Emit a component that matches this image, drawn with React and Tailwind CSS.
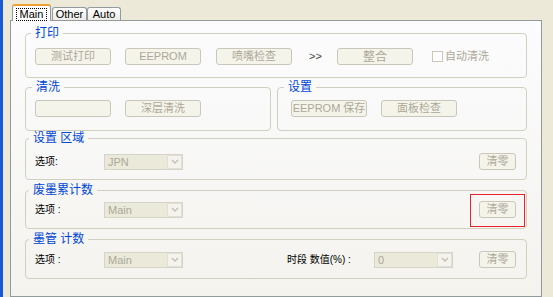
import React from 'react';

function Btn({ children, className = '' }) {
    return (
        <div className={`h-[17px] shrink-0 flex items-center justify-center rounded-[3px] border border-[#c9c7ba] bg-[#f5f4ea] text-[11px] leading-none text-[#aca899] ${className}`}>
            {children}
        </div>
    );
}

function Combo({ value, className = '' }) {
    return (
        <div className={`h-[16px] w-[79px] shrink-0 flex border border-[#d6d4c8] bg-[#ebe9da] ${className}`}>
            <div className="flex-1 pl-[3px] text-[11px] leading-[14px] text-[#aca899]">{value}</div>
            <div className="w-[15px] flex items-center justify-center border border-[#e2e0d6] bg-[#f4f3ec]">
                <svg width="8" height="5" viewBox="0 0 8 5">
                    <path d="M1 1l3 3 3-3" stroke="#c4c2b6" fill="none" strokeWidth="1.5" />
                </svg>
            </div>
        </div>
    );
}

function Group({ title, legendClass = '', className = '', children }) {
    return (
        <fieldset className={`relative border border-[#d0d0bf] rounded-[4px] ${className}`}>
            <legend className={`h-[13px] px-[4px] text-[12px] leading-[13px] text-[#0046d5] ${legendClass}`}>
                {title}
            </legend>
            {children}
        </fieldset>
    );
}

function Label({ children, className = '' }) {
    return <div className={`shrink-0 text-[10px] leading-none text-black ${className}`}>{children}</div>;
}

export default function App() {
    return (
        <div className="w-[553px] h-[297px] flex overflow-hidden bg-[#ece9d8] font-[family-name:Liberation_Sans,Noto_Sans_CJK_SC,sans-serif]">
            {/* window edge */}
            <div className="w-[3px] bg-[#1a5ad9]" />

            <div className="ml-[7px] w-[532px] flex flex-col">
                {/* Tabs */}
                <div className="h-[20px] flex items-end pl-[2px] text-[11px] text-black">
                    <div className="relative z-10 -mb-px h-[17px] w-[39px] flex items-start justify-center pt-[2px] rounded-t-[3px] border-x border-t-2 border-x-[#919b9c] border-t-[#f0a030] bg-[#fcfcfe]">
                        <span className="px-[3px] leading-[11px] border border-dotted border-black">Main</span>
                    </div>
                    <div className="ml-[1px] h-[13px] w-[35px] flex items-center justify-center rounded-t-[3px] border-x border-t border-[#919b9c] bg-linear-to-b from-white to-[#ecebe6] leading-none">
                        Other
                    </div>
                    <div className="h-[13px] w-[34px] flex items-center justify-center rounded-t-[3px] border-x border-t border-[#919b9c] bg-linear-to-b from-white to-[#ecebe6] leading-none">
                        Auto
                    </div>
                </div>

                {/* Panel */}
                <div className="flex-1 flex flex-col border border-[#919b9c] bg-linear-to-b from-[#fcfcfe] to-[#f4f3ee] pt-[6px] px-[14px]">
                    {/* 打印 */}
                    <Group title="打印" legendClass="ml-[5px]" className="h-[51px]">
                        <div className="mt-[8px] flex items-center pl-[9px]">
                            <Btn className="w-[76px]">测试打印</Btn>
                            <Btn className="w-[76px] ml-[14px]">EEPROM</Btn>
                            <Btn className="w-[76px] ml-[15px]">喷嘴检查</Btn>
                            <div className="ml-[17px] w-[10px] text-[11px] leading-none text-[#444]">&gt;&gt;</div>
                            <Btn className="w-[76px] ml-[18px] text-[12px]">整合</Btn>
                            <div className="ml-[19px] w-[11px] h-[11px] border border-[#c9c7ba] bg-white" />
                            <div className="ml-[2px] text-[11px] leading-none text-[#aca899]">自动清洗</div>
                        </div>
                    </Group>

                    {/* 清洗 / 设置 */}
                    <div className="mt-[3px] flex gap-[6px]">
                        <Group title="清洗" legendClass="ml-[6px]" className="w-[246px] h-[50px]">
                            <div className="mt-[6px] flex items-center pl-[9px]">
                                <Btn className="w-[76px]" />
                                <Btn className="w-[76px] ml-[14px]">深层清洗</Btn>
                            </div>
                        </Group>
                        <Group title="设置" legendClass="ml-[6px]" className="w-[250px] h-[50px]">
                            <div className="mt-[6px] flex items-center pl-[13px]">
                                <Btn className="w-[76px]">EEPROM 保存</Btn>
                                <Btn className="w-[76px] ml-[14px]">面板检查</Btn>
                            </div>
                        </Group>
                    </div>

                    {/* 设置区域 */}
                    <Group title="设置 区域" legendClass="ml-[3px]" className="mt-[1px] h-[48px]">
                        <div className="mt-[8px] flex items-center pl-[9px] pr-[10px]">
                            <Label className="w-[69px]">选项:</Label>
                            <Combo value="JPN" />
                            <Btn className="w-[37px] ml-auto">清零</Btn>
                        </div>
                    </Group>

                    {/* 废墨累计数 */}
                    <Group title="废墨累计数" legendClass="ml-[3px]" className="mt-[4px] h-[45px]">
                        <div className="mt-[4px] flex items-center pl-[9px] pr-[10px]">
                            <Label className="w-[69px]">选项 :</Label>
                            <Combo value="Main" />
                            <Btn className="w-[37px] ml-auto">清零</Btn>
                        </div>
                        <div className="absolute left-[444px] top-[-3px] w-[55px] h-[33px] border border-[#e8212b]" />
                    </Group>

                    {/* 墨管计数 */}
                    <Group title="墨管 计数" legendClass="ml-[3px]" className="mt-[4px] h-[46px]">
                        <div className="mt-[5px] flex items-center pl-[9px]">
                            <Label className="w-[69px]">选项 :</Label>
                            <Combo value="Main" />
                            <Label className="ml-[104px] w-[87px]">时段 数值(%) :</Label>
                            <Combo value="0" />
                            <Btn className="w-[37px] ml-[26px]">清零</Btn>
                        </div>
                    </Group>
                </div>
            </div>
        </div>
    );
}
